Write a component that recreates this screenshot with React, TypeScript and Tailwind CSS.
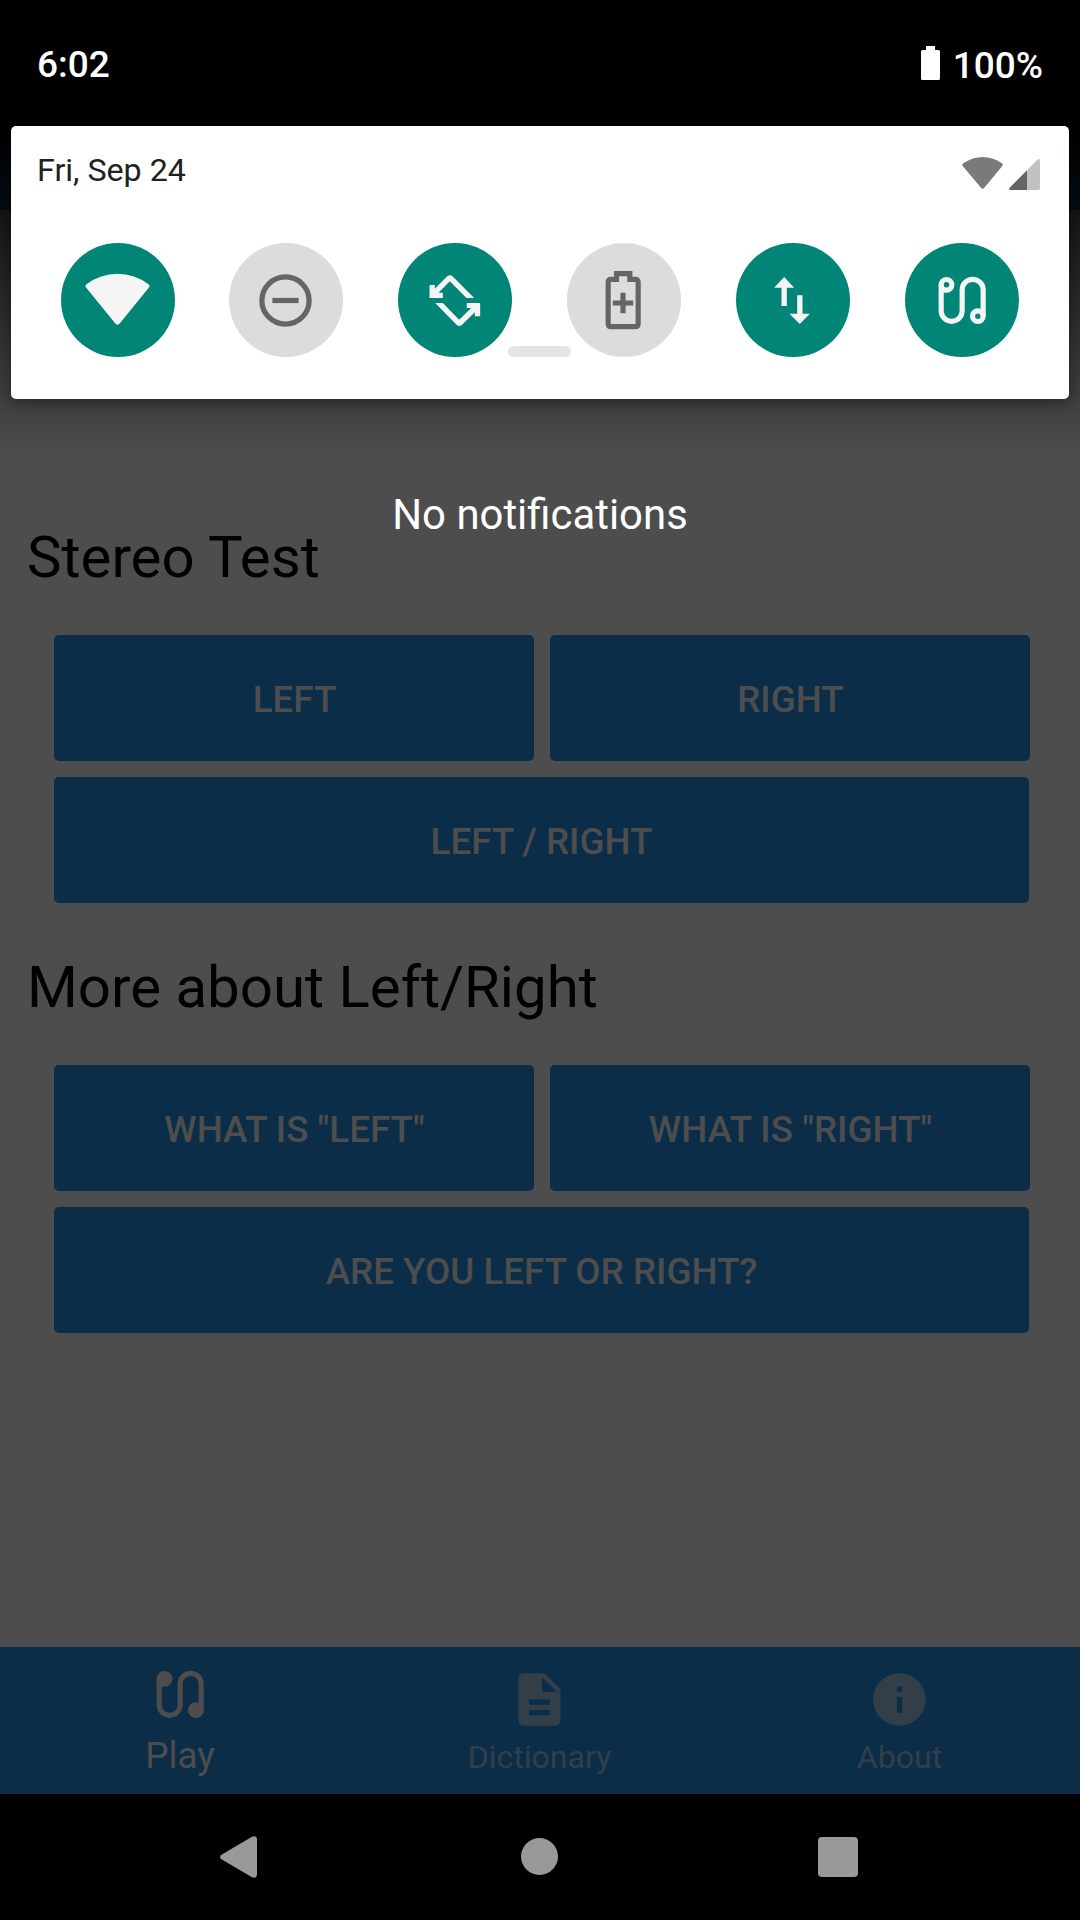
import React from 'react';
import { MdDescription, MdInfo } from 'react-icons/md';

function WifiTile() {
  return (
    <svg viewBox="259.5 145.5 189 189" className="size-[63px] overflow-visible" fill="#f5f5f5">
      <path d="M261 194A155 155 0 0 1 447 194Q453 198 449 203L360 313Q354 319 348 313L259 203Q255 198 261 194Z" />
    </svg>
  );
}

function DndTile() {
  return (
    <svg viewBox="0 0 24 24" className="mt-px size-[63px]" fill="none" stroke="#656565" strokeWidth="2">
      <circle cx="12" cy="12" r="9" />
      <path d="M7 12h10" />
    </svg>
  );
}

function RotateTile() {
  return (
    <svg viewBox="189.5 144 189 189" className="size-[63px]" fill="#f5f5f5">
      <path d="M209 195H225V206L262 169Q270 162 278 169L343 234H320L270 184L236 218H249V234H209Z" />
      <path d="M361 289H345V277L306 315Q298 321 291 315L226 249H249L298 299L334 264H321V249H361Z" />
    </svg>
  );
}

function SaverTile() {
  return (
    <svg viewBox="696.5 144 189 189" className="size-[63px]" fill="none" stroke="#656565" strokeWidth="15.5">
      <path d="M770 161H810V178H826Q835 178 835 187V311Q835 320 826 320H754Q745 320 745 311V187Q745 178 754 178H770Z" />
      <path d="M759 249H820M789.5 218V280" />
    </svg>
  );
}

function DataTile() {
  return (
    <svg viewBox="124.5 144 189 189" className="size-[63px]" fill="#f5f5f5">
      <path d="M194 171L224 203H202V258H186V203H164Z" />
      <path d="M233 226H249V281H271L241 312L210 281H233Z" />
    </svg>
  );
}

function CableIcon({ filled }: { filled?: boolean }) {
  return (
    <svg
      viewBox="631.5 144.5 189 189"
      className="size-[63px]"
      fill={filled ? 'currentColor' : 'none'}
      stroke="currentColor"
      strokeWidth="15.5"
    >
      <circle cx="681" cy="195" r="16" />
      <path fill="none" d="M665 195V273A31.5 31.5 0 0 0 728 273V210A31.5 31.5 0 0 1 791 210V289" />
      <path fill="none" strokeWidth="10" d="M662 213H681" />
      <circle cx="775" cy="289" r="16" />
    </svg>
  );
}

const tiles = [
  { name: 'Wi-Fi', on: true, icon: <WifiTile /> },
  { name: 'Do not disturb', on: false, icon: <DndTile /> },
  { name: 'Auto-rotate', on: true, icon: <RotateTile /> },
  { name: 'Battery saver', on: false, icon: <SaverTile /> },
  { name: 'Mobile data', on: true, icon: <DataTile /> },
  { name: 'Stereo test', on: true, icon: <CableIcon /> },
];

function ActionButton({ label, wide }: { label: string; wide?: boolean }) {
  return (
    <button
      className={`flex h-[126px] items-center justify-center rounded-[5px] bg-[#0b2d48] pt-[4px] text-[36.75px] font-medium leading-none text-[#4d4d4d] ${
        wide ? 'col-span-2 mr-px' : 'pl-px'
      }`}
    >
      {label}
    </button>
  );
}

function Section({ title, labels }: { title: string; labels: [string, string, string] }) {
  return (
    <section>
      <h2 className="h-[112px] pl-[27px] text-[58.2px] leading-[68px] text-black">{title}</h2>
      <div className="ml-[54px] grid w-[976px] grid-cols-2 gap-4">
        <ActionButton label={labels[0]} />
        <ActionButton label={labels[1]} />
        <ActionButton label={labels[2]} wide />
      </div>
    </section>
  );
}

function Shade() {
  return (
    <div className="absolute inset-x-0 top-0 flex flex-col text-white">
      <header className="flex h-[126px] items-center justify-between px-[37px] text-[37px] font-medium leading-none">
        <span className="pt-[3px]">6:02</span>
        <span className="flex items-center gap-[13px]">
          <svg viewBox="0 0 19 34" className="h-[34px] w-[19px]" fill="#fff">
            <path d="M5 0H14V4H17.5Q19 4 19 5.5V32.5Q19 34 17.5 34H1.5Q0 34 0 32.5V5.5Q0 4 1.5 4H5Z" />
          </svg>
          <span className="pt-[4px] text-[37px]">100%</span>
        </span>
      </header>
      <div className="relative mx-[11px] h-[273px] rounded-[5px] bg-white shadow-[0_3px_14px_rgba(0,0,0,0.45)]">
        <div className="flex h-[90px] items-center justify-between pl-[26px] pr-[29px]">
          <span className="pb-[2px] text-[32.2px] leading-none text-[#212121]">Fri, Sep 24</span>
          <span className="flex items-center gap-[6px] pt-[4px]">
            <svg viewBox="727 471 121 96" className="h-[32px] w-[41px]" fill="#7a7a7a">
              <path d="M730 490Q788 452 846 490Q850 493 847 498L793 563Q788 569 783 563L728 498Q725 493 730 490Z" />
            </svg>
            <svg viewBox="867 477 93 93" className="mt-[3px] size-[31px]">
              <path d="M921 511L951 480Q960 473 960 483V565Q960 570 955 570H921Z" fill="#c2c2c2" />
              <path d="M921 511V570H871Q864 568 869 563Z" fill="#656565" />
            </svg>
          </span>
        </div>
        <div className="mt-[26.5px] flex gap-[54.5px] pl-[49.5px]">
          {tiles.map((t) => (
            <span
              key={t.name}
              aria-label={t.name}
              className={`flex size-[114.5px] shrink-0 items-center justify-center rounded-full text-[#f5f5f5] nth-2:-ml-px ${
                t.on ? 'bg-[#008577]' : 'bg-[#dcdcdc]'
              }`}
            >
              {t.icon}
            </span>
          ))}
        </div>
        <div className="absolute left-[497px] top-[220px] h-[11px] w-[63px] rounded-full bg-[#e4e4e4]" />
      </div>
      <p className="mt-[91px] text-center text-[41.9px] leading-[49px]">No notifications</p>
    </div>
  );
}

export default function App() {
  return (
    <div className="relative flex h-[1920px] w-[1080px] flex-col overflow-hidden bg-[#4d4d4d] font-[Roboto,sans-serif]">
      <div className="h-[210px] bg-[#0b2d48]" />
      <main className="flex flex-1 flex-col gap-[50px] pt-[313px]">
        <Section title="Stereo Test" labels={['LEFT', 'RIGHT', 'LEFT / RIGHT']} />
        <Section
          title="More about Left/Right"
          labels={['WHAT IS "LEFT"', 'WHAT IS "RIGHT"', 'ARE YOU LEFT OR RIGHT?']}
        />
      </main>
      <nav className="grid h-[147px] grid-cols-3 bg-[#0b2d48] text-[#323f49]">
        <div className="flex flex-col items-center pr-px pt-[15px] text-[#4d4d4d]">
          <CableIcon filled />
          <span className="mt-[9px] pl-px text-[36.9px] leading-[43px]">Play</span>
        </div>
        <div className="flex flex-col items-center pr-px pt-[21px]">
          <MdDescription className="size-[63px]" />
          <span className="mt-[8px] text-[32.1px] leading-[37px]">Dictionary</span>
        </div>
        <div className="flex flex-col items-center pr-px pt-[21px]">
          <MdInfo className="size-[63px]" />
          <span className="mt-[8px] text-[32.1px] leading-[37px]">About</span>
        </div>
      </nav>
      <footer className="flex h-[126px] items-center bg-black">
        <svg viewBox="0 0 37 42" className="ml-[220px] h-[42px] w-[37px]" fill="#999">
          <path d="M1 19L32 .7Q37 -1 37 4V38Q37 43 32 41.3L1 23Q-1 21 1 19Z" />
        </svg>
        <div className="-mt-px ml-[264px] size-[37px] rounded-full bg-[#999]" />
        <div className="ml-[260px] size-[40px] rounded-[4px] bg-[#999]" />
      </footer>
      <div className="absolute inset-x-0 top-0 h-[460px] bg-linear-to-b from-black from-27% to-transparent" />
      <Shade />
    </div>
  );
}
